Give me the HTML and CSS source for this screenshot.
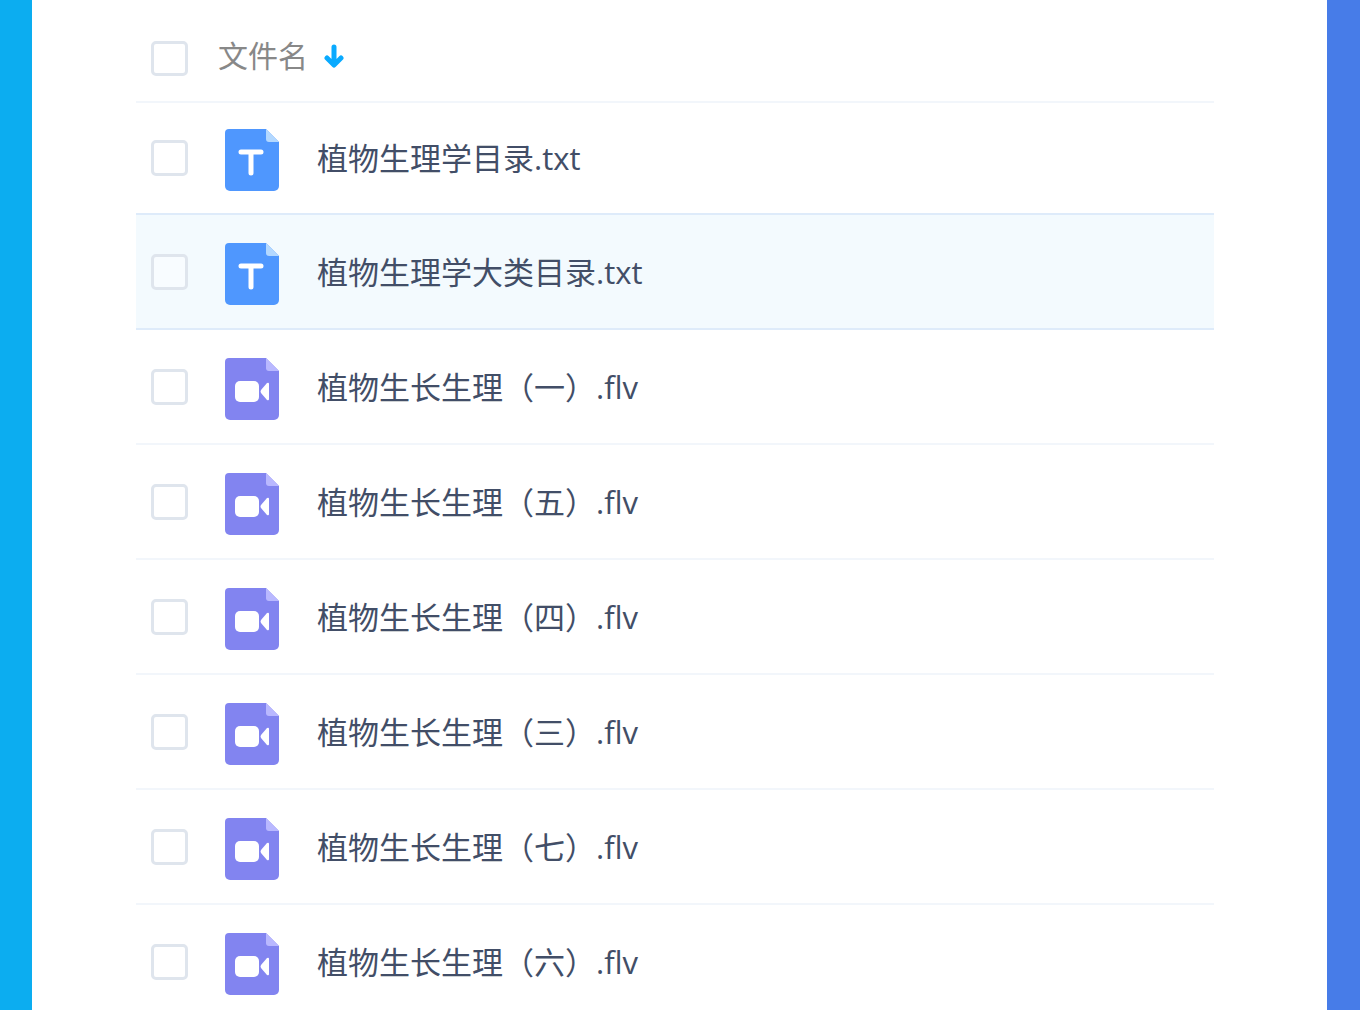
FILE: index.html
```html
<!DOCTYPE html>
<html lang="zh-CN">
<head>
<meta charset="utf-8">
<meta name="viewport" content="width=device-width, initial-scale=1">
<title>文件名</title>
<link rel="stylesheet" href="styles.css">
</head>
<body>
<svg class="sprite" aria-hidden="true">
  <symbol id="text-file" viewBox="0 0 56 62">
    <path fill="#4f97fe" d="M5 0H42L55 13V57a5 5 0 0 1-5 5H6a5 5 0 0 1-5-5V4a4 4 0 0 1 4-4Z"/>
    <path fill="#b3d8ff" d="M42 0L55 13H45a3 3 0 0 1-3-3Z"/>
    <path fill="none" stroke="#fff" stroke-width="5" stroke-linecap="round" d="M17 23H37M27 23V44"/>
  </symbol>
  <symbol id="video-file" viewBox="0 0 56 62">
    <path fill="#8284f0" d="M5 0H42L55 13V57a5 5 0 0 1-5 5H6a5 5 0 0 1-5-5V4a4 4 0 0 1 4-4Z"/>
    <path fill="#b9b8ff" d="M42 0L55 13H45a3 3 0 0 1-3-3Z"/>
    <rect x="11" y="23" width="24" height="21" rx="5" fill="#fff"/>
    <path fill="#fff" d="M37 32L43 25Q45 24 45 26V41Q45 43 43 42L37 35Q36 33.500 37 32Z"/>
  </symbol>
</svg>
<main class="panel">
  <table class="files">
    <colgroup>
      <col class="col-pick">
      <col class="col-kind">
      <col>
    </colgroup>
    <thead>
      <tr>
        <th class="pick"><input type="checkbox" aria-label="全选"></th>
        <th class="heading" colspan="2">
          <button class="sort" type="button">文件名
            <svg class="arrow" viewBox="0 0 20 24" aria-hidden="true"><path d="M10 3V20M3 14L10 21L17 14"/></svg>
          </button>
        </th>
      </tr>
    </thead>
    <tbody>
      <tr class="first">
        <td class="pick"><input type="checkbox" id="f1"></td>
        <td class="kind"><svg class="icon" aria-hidden="true"><use href="#text-file"/></svg></td>
        <td class="name"><label for="f1">植物生理学目录.txt</label></td>
      </tr>
      <tr class="active">
        <td class="pick"><input type="checkbox" id="f2"></td>
        <td class="kind"><svg class="icon" aria-hidden="true"><use href="#text-file"/></svg></td>
        <td class="name"><label for="f2">植物生理学大类目录.txt</label></td>
      </tr>
      <tr>
        <td class="pick"><input type="checkbox" id="f3"></td>
        <td class="kind"><svg class="icon" aria-hidden="true"><use href="#video-file"/></svg></td>
        <td class="name"><label for="f3">植物生长生理（一）.flv</label></td>
      </tr>
      <tr>
        <td class="pick"><input type="checkbox" id="f4"></td>
        <td class="kind"><svg class="icon" aria-hidden="true"><use href="#video-file"/></svg></td>
        <td class="name"><label for="f4">植物生长生理（五）.flv</label></td>
      </tr>
      <tr>
        <td class="pick"><input type="checkbox" id="f5"></td>
        <td class="kind"><svg class="icon" aria-hidden="true"><use href="#video-file"/></svg></td>
        <td class="name"><label for="f5">植物生长生理（四）.flv</label></td>
      </tr>
      <tr>
        <td class="pick"><input type="checkbox" id="f6"></td>
        <td class="kind"><svg class="icon" aria-hidden="true"><use href="#video-file"/></svg></td>
        <td class="name"><label for="f6">植物生长生理（三）.flv</label></td>
      </tr>
      <tr>
        <td class="pick"><input type="checkbox" id="f7"></td>
        <td class="kind"><svg class="icon" aria-hidden="true"><use href="#video-file"/></svg></td>
        <td class="name"><label for="f7">植物生长生理（七）.flv</label></td>
      </tr>
      <tr>
        <td class="pick"><input type="checkbox" id="f8"></td>
        <td class="kind"><svg class="icon" aria-hidden="true"><use href="#video-file"/></svg></td>
        <td class="name"><label for="f8">植物生长生理（六）.flv</label></td>
      </tr>
    </tbody>
  </table>
</main>
</body>
</html>
```

FILE: styles.css
```css
* {
  box-sizing: border-box;
}

body {
  margin: 0;
  color: #424e67;
  font-family: "Open Sans", "Noto Sans CJK SC", sans-serif;
  font-size: 31px;
  line-height: 40px;
}

.sprite {
  display: none;
}

/* The file list scrolls between the two coloured page edges. */
.panel {
  height: 100vh;
  padding: 0 113px 0 104px;
  overflow-y: auto;
  scrollbar-width: none;
  background: #fff;
  border-left: 32px solid #0cadf0;
  border-right: 33px solid #477ce8;
}

.files {
  width: 100%;
  border-collapse: separate;
  border-spacing: 0;
  table-layout: fixed;
}

.col-pick {
  width: 82px;
}

.col-kind {
  width: 99px;
}

th,
td {
  height: 115px;
  padding: 0;
  text-align: left;
  vertical-align: middle;
  border-bottom: 2px solid #f2f6fb;
}

.first td {
  height: 112px;
}

.first td,
.active td {
  border-bottom-color: #deebfa;
}

.active td {
  background: #f3fafe;
}

.pick {
  padding-left: 15px;
}

.kind {
  padding: 4px 0 0 6px;
}

thead th {
  height: 103px;
}

thead .pick {
  padding-top: 15px;
}

.heading {
  padding-top: 10px;
  font-weight: 400;
}

.pick input {
  display: block;
  appearance: none;
  width: 37px;
  height: 36px;
  margin: 0;
  background: #fff;
  border: 3px solid #dfe5ed;
  border-radius: 5px;
}

thead .pick input {
  height: 35px;
}

.active .pick input {
  background: #f8fcff;
}

.pick input:checked {
  background: #09aaff;
}

.icon {
  display: block;
  width: 56px;
  height: 62px;
}

.sort {
  display: flex;
  align-items: center;
  gap: 16px;
  padding: 0;
  color: #888;
  font: inherit;
  font-size: 30px;
  background: none;
  border: 0;
}

.arrow {
  width: 20px;
  height: 24px;
  fill: none;
  stroke: #09aaff;
  stroke-width: 5;
  stroke-linecap: round;
  stroke-linejoin: round;
}
```
